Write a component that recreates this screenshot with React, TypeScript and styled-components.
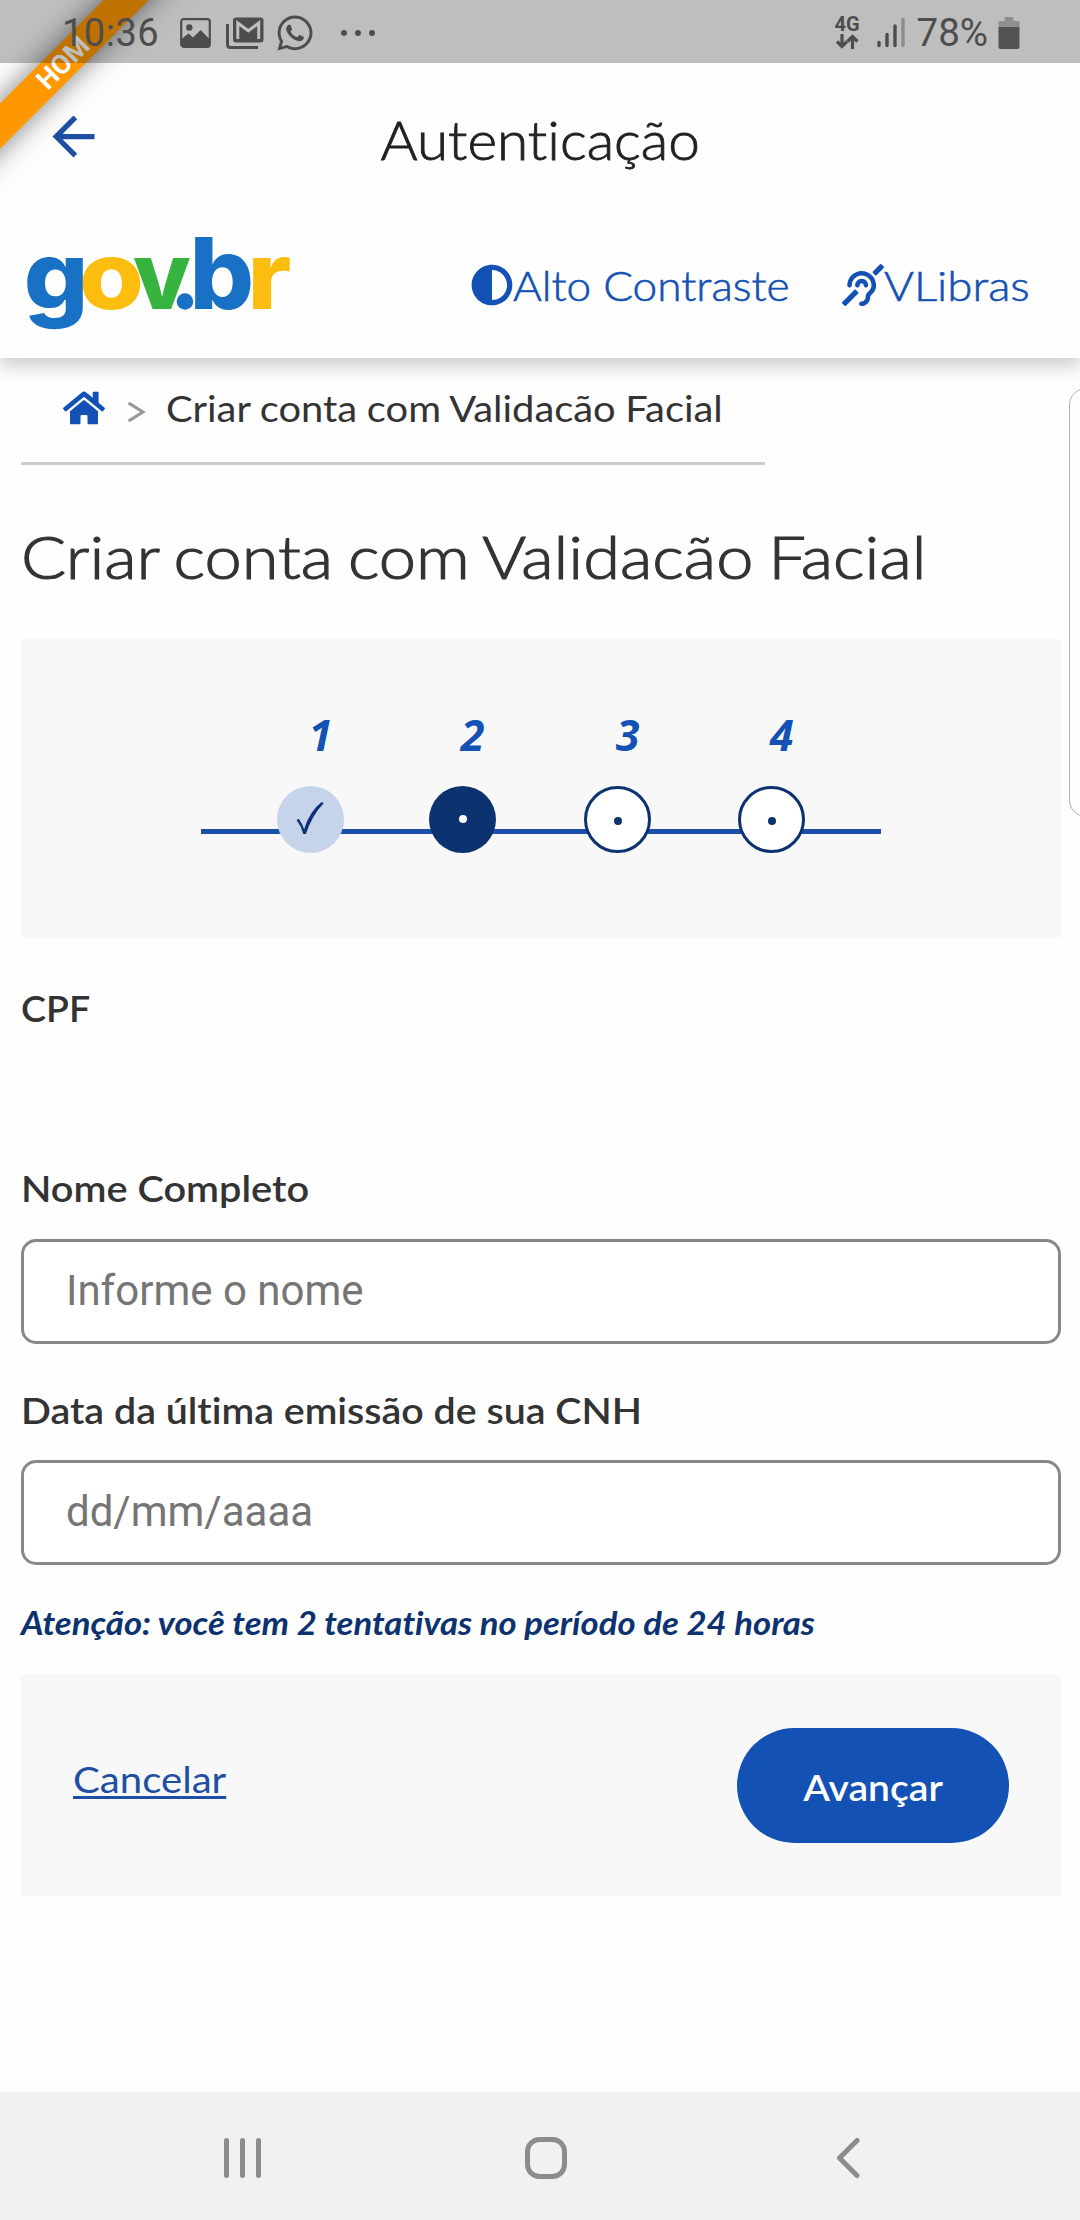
import React from "react";
import styled, { createGlobalStyle } from "styled-components";
import { FaAdjust, FaDeaf, FaHome, FaWhatsapp } from "react-icons/fa";
import { MdArrowBack } from "react-icons/md";

const blue = "#1351b4";
const navy = "#0c326f";
const ink = "#333333";
const statusInk = "#4d4d4d";

const GlobalStyle = createGlobalStyle`
  * { box-sizing: border-box; }
  body { margin: 0; background: #fefefe; }
`;

const Screen = styled.div`
  position: relative;
  width: 1080px;
  height: 2220px;
  display: flex;
  flex-direction: column;
  overflow: hidden;
  background: #fefefe;
  color: ${ink};
  font-family: Lato, "Open Sans", sans-serif;
  font-variant-ligatures: none;
`;

/* Widens the letterforms of a run of text, keeping its height. */
const Wide = styled.span<{ $x: number; $origin?: string }>`
  display: inline-block;
  white-space: nowrap;
  transform: scaleX(${(p) => p.$x});
  transform-origin: ${(p) => p.$origin ?? "left"} center;
`;

const Ribbon = styled.div`
  position: absolute;
  top: 47px;
  left: -87px;
  width: 300px;
  height: 31.5px;
  display: flex;
  align-items: center;
  justify-content: center;
  background: #ff9800;
  color: #fff;
  font: 700 27px/30px Roboto, sans-serif;
  transform: rotate(-45deg);
  box-shadow: 0 0 28px rgba(0, 0, 0, 0.5);
  z-index: 1;
`;

const StatusBar = styled.header`
  position: relative;
  z-index: 2;
  flex: none;
  height: 63px;
  padding: 2px 60px 0 62px;
  display: flex;
  justify-content: space-between;
  align-items: center;
  background: rgba(0, 0, 0, 0.25);
  color: ${statusInk};
`;

const StatusGroup = styled.div<{ $gap: number }>`
  display: flex;
  align-items: center;
  gap: ${(p) => p.$gap}px;
  svg { display: block; }
`;

const Clock = styled.span`
  width: 103px;
  font: 400 38px/44px Roboto, sans-serif;
  letter-spacing: 0.5px;
`;

const ChatIcon = styled(FaWhatsapp)`
  margin: 0 10px 0 -4px;
`;

const Battery = styled.span`
  margin-left: 2px;
  font: 400 38.500px/44px Roboto, sans-serif;
`;

const Network = styled.div`
  margin-right: 7px;
  display: flex;
  flex-direction: column;
  align-items: center;
  gap: 2px;
  font: 700 20px/16px Roboto, sans-serif;
`;

const TitleBar = styled.div`
  flex: none;
  height: 146px;
  padding: 0 42px;
  display: grid;
  grid-template-columns: 63px 1fr 63px;
  align-items: center;
`;

const BackButton = styled.button`
  border: 0;
  padding: 0;
  width: 63px;
  height: 63px;
  background: none;
  color: #1f4fa3;
  svg { display: block; }
`;

const Title = styled.h1`
  margin: 8px 0 0;
  text-align: center;
  font-size: 53px;
  line-height: 64px;
  font-weight: 300;
  color: #212121;
  -webkit-text-stroke: 0.8px #212121;
`;

const GovHeader = styled.div`
  flex: none;
  height: 149px;
  padding: 0 50px 0 20px;
  display: flex;
  justify-content: space-between;
  align-items: center;
  background: #fefefe;
  box-shadow: 0 9px 16px rgba(0, 0, 0, 0.19);
  clip-path: inset(0 0 -40px 0);
  svg { display: block; }
`;

const Links = styled.nav`
  display: flex;
  gap: 52px;
  padding-top: 4px;
`;

const HeaderLink = styled.a<{ $width: number }>`
  width: ${(p) => p.$width}px;
  display: flex;
  align-items: center;
  font-size: 41px;
  line-height: 48px;
  font-weight: 300;
  color: ${blue};
  -webkit-text-stroke: 0.6px ${blue};
  svg { flex: none; margin-top: -1px; }
`;

const Breadcrumb = styled.nav`
  flex: none;
  width: 744px;
  height: 107px;
  margin-left: 21px;
  padding: 0 0 4px 42px;
  display: flex;
  align-items: center;
  border-bottom: 3px solid #cccccc;
  font-size: 36px;
  line-height: 44px;
  word-spacing: -0.5px;
  svg { display: block; color: ${blue}; }
`;

const Separator = styled.svg`
  margin: 7px 20px 0 22px;
`;

const Content = styled.main`
  flex: 1;
  padding: 0 19px 0 21px;
  display: flex;
  flex-direction: column;
`;

const Heading = styled.h2`
  margin: 56px 0 46px;
  font-size: 59px;
  line-height: 72px;
  height: 72px;
  font-weight: 300;
  word-spacing: -3px;
  -webkit-text-stroke: 1.1px ${ink};
`;

const StepPanel = styled.section`
  flex: none;
  height: 299px;
  padding: 73px 180px 0;
  background: #f8f8f8;
`;

const Track = styled.ol`
  position: relative;
  margin: 0;
  padding: 0 0 0 76px;
  list-style: none;
  display: grid;
  grid-template-columns: 152px 155px 154px 67px;
  &::before {
    content: "";
    position: absolute;
    left: 0;
    right: 0;
    top: 117px;
    height: 5px;
    background: #1a50a8;
  }
`;

const Step = styled.li`
  position: relative;
  width: 67px;
  display: flex;
  flex-direction: column;
  align-items: center;
  gap: 29px;
`;

const StepNumber = styled.span`
  padding: 1px 0 0 20px;
  font: italic 700 43px/44px "Open Sans", "Noto Sans", sans-serif;
  color: ${blue};
`;

type StepState = "done" | "current" | "todo";

const StepCircle = styled.span<{ $state: StepState }>`
  width: 67px;
  height: 67px;
  border-radius: 50%;
  display: flex;
  align-items: center;
  justify-content: center;
  border: ${(p) => (p.$state === "todo" ? `3px solid ${navy}` : "0")};
  background: ${(p) => ({ done: "#c5d4eb", current: navy, todo: "#fff" })[p.$state]};
`;

const Dot = styled.i<{ $state: StepState }>`
  width: 8px;
  height: 8px;
  border-radius: 50%;
  margin-top: ${(p) => (p.$state === "todo" ? 3 : -1)}px;
  background: ${(p) => (p.$state === "todo" ? navy : "#fff")};
`;

const Label = styled.label<{ $top: number }>`
  margin-top: ${(p) => p.$top}px;
  height: 44px;
  font-size: 37px;
  line-height: 44px;
  font-weight: 600;
`;

const Field = styled.input<{ $top: number }>`
  flex: none;
  width: 100%;
  height: 105px;
  margin-top: ${(p) => p.$top}px;
  padding: 0 42px 2px;
  border: 3px solid #888888;
  border-radius: 15px;
  background: #fff;
  font: 400 42px/50px Roboto, sans-serif;
  &::placeholder { color: #757575; opacity: 1; }
`;

const Warning = styled.p`
  margin: 38px 0 32px;
  height: 40px;
  font-size: 32px;
  line-height: 40px;
  font-weight: 700;
  font-style: italic;
  color: ${navy};
`;

const Actions = styled.section`
  flex: none;
  height: 221px;
  padding: 0 52px;
  display: flex;
  align-items: center;
  justify-content: space-between;
  background: #f8f8f8;
`;

const Cancel = styled.a`
  margin-top: -14px;
  font-size: 37px;
  line-height: 44px;
  color: #1f4fa3;
  span {
    text-decoration: underline;
    text-decoration-thickness: 3px;
    text-underline-offset: 3px;
    text-decoration-skip-ink: none;
  }
`;

const Submit = styled.button`
  width: 272px;
  height: 115px;
  padding: 3px 0 0;
  border: 0;
  border-radius: 58px;
  background: ${blue};
  color: #fff;
  font: 600 37px/44px Lato, sans-serif;
`;

const EdgePanel = styled.aside`
  position: absolute;
  left: 1069px;
  top: 388px;
  width: 40px;
  height: 429px;
  border: 1.5px solid #b0b0b0;
  border-radius: 17px;
  background: #fefefe;
`;

const NavBar = styled.footer`
  flex: none;
  height: 128px;
  padding: 4px 213px 0 221px;
  display: flex;
  align-items: center;
  justify-content: space-between;
  background: #f1f1f1;
`;

const HomeKey = styled.svg`
  margin-right: 11px;
`;

const logoGlyphs = [
  { ch: "o", x: 79, sx: 1.115, sy: 1, fill: "#fdbd0e" },
  { ch: "g", x: 23.8, sx: 1.077, sy: 1, fill: "#1871c4" },
  { ch: "v", x: 133, sx: 1, sy: 1, fill: "#37b440" },
  { ch: "b", x: 189.6, sx: 1.077, sy: 1.05, fill: "#1871c4" },
  { ch: "r", x: 247.3, sx: 1.12, sy: 1, fill: "#fdbd0e" },
];

const LogoSvg = styled.svg`
  overflow: visible;
`;

const GovLogo = () => (
  <LogoSvg width="276" height="110" viewBox="20 228 276 110" role="img" aria-label="gov.br">
    {logoGlyphs.map((g) => (
      <text
        key={g.ch}
        transform={`translate(${g.x} 307.5) scale(${g.sx} ${g.sy})`}
        fontFamily="Inter, sans-serif"
        fontWeight="800"
        fontSize="94"
        fill={g.fill}
      >
        {g.ch}
      </text>
    ))}
    <circle cx="185" cy="300.5" r="8.3" fill="#1871c4" />
  </LogoSvg>
);

const PhotoIcon = () => (
  <svg width="31" height="30" viewBox="0 0 31 30">
    <rect x="1.200" y="1.200" width="28.600" height="27.600" rx="2.500" fill="none" stroke={statusInk} strokeWidth="2.200" />
    <circle cx="9.300" cy="9.500" r="3.200" fill={statusInk} />
    <path d="M2 20.500l6.500-5 4.500 4 7.500-7.500 9 9V28H2z" fill={statusInk} />
  </svg>
);

const MailStackIcon = () => (
  <svg width="38" height="32" viewBox="0 0 38 32">
    <path d="M1.500 7v20.500q0 3 3 3H32" fill="none" stroke={statusInk} strokeWidth="3" />
    <rect x="7" y="0.500" width="30.500" height="25" rx="3" fill={statusInk} />
    <path d="M11.800 22V6l10.500 7.800L32.700 6v16" fill="none" stroke="#bfbfbf" strokeWidth="3" />
  </svg>
);

const DotsIcon = () => (
  <svg width="36" height="8" viewBox="0 0 36 8">
    {[4, 18, 32].map((x) => (
      <circle key={x} cx={x} cy="4" r="3" fill={statusInk} />
    ))}
  </svg>
);

const DataArrowsIcon = () => (
  <svg width="24" height="15" viewBox="0 0 24 15" fill="none" stroke={statusInk} strokeWidth="3.200">
    <path d="M7 0v12M2 7.500l5 5 5-5M17.500 15V3M12.500 7.500l5-5 5 5" />
  </svg>
);

const SignalIcon = () => (
  <svg width="28" height="31" viewBox="0 0 28 31" strokeWidth="3.400" strokeLinecap="round" stroke={statusInk}>
    <path d="M2 28.500v-3M10 28.500v-11M18 28.500V9" />
    <path d="M26 28.500V2.500" stroke="#8c8c8c" />
  </svg>
);

const BatteryIcon = () => (
  <svg width="22" height="34" viewBox="0 0 22 34">
    <path d="M6.500 1h9v4H20q1.500 0 1.500 1.500V12H.5V6.500Q.5 5 2 5h4.500z" fill="#8f8f8f" />
    <path d="M.5 11h21v20q0 2-2 2h-17q-2 0-2-2z" fill="#525252" />
  </svg>
);

const CheckSvg = styled.svg`
  margin-top: -3px;
`;

const CheckIcon = () => (
  <CheckSvg width="31" height="35" viewBox="0 0 30 34">
    <path
      d="M1.500 18.500l2-1.300q3.700 4.800 5.300 10.300Q14 10 25.800 1l2 1.200Q16.500 14 10.500 32H8Q6 24.500 1.500 18.500z"
      fill={navy}
    />
  </CheckSvg>
);

const steps: { n: number; state: StepState }[] = [
  { n: 1, state: "done" },
  { n: 2, state: "current" },
  { n: 3, state: "todo" },
  { n: 4, state: "todo" },
];

export default function App() {
  return (
    <Screen>
      <GlobalStyle />
      <Ribbon>HOM</Ribbon>
      <StatusBar>
        <StatusGroup $gap={15}>
          <Clock>10:36</Clock>
          <PhotoIcon />
          <MailStackIcon />
          <ChatIcon size={40} />
          <DotsIcon />
        </StatusGroup>
        <StatusGroup $gap={10}>
          <Network>
            4G
            <DataArrowsIcon />
          </Network>
          <SignalIcon />
          <Battery>78%</Battery>
          <BatteryIcon />
        </StatusGroup>
      </StatusBar>
      <TitleBar>
        <BackButton aria-label="Voltar">
          <MdArrowBack size={63} />
        </BackButton>
        <Title>
          <Wide $x={1.07} $origin="center">Autenticação</Wide>
        </Title>
      </TitleBar>
      <GovHeader>
        <GovLogo />
        <Links>
          <HeaderLink $width={319}>
            <FaAdjust size={42} />
            <Wide $x={1.076}>Alto Contraste</Wide>
          </HeaderLink>
          <HeaderLink $width={188}>
            <FaDeaf size={42} />
            <Wide $x={1.115}>VLibras</Wide>
          </HeaderLink>
        </Links>
      </GovHeader>
      <Breadcrumb>
        <FaHome size={42} />
        <Separator width="19" height="22" viewBox="0 0 19 22">
          <path d="M1.500 2L16 11 1.500 20" fill="none" stroke="#999" strokeWidth="3.200" />
        </Separator>
        <Wide $x={1.108}>Criar conta com Validacão Facial</Wide>
      </Breadcrumb>
      <Content>
        <Heading>
          <Wide $x={1.132}>Criar conta com Validacão Facial</Wide>
        </Heading>
        <StepPanel>
          <Track>
            {steps.map(({ n, state }) => (
              <Step key={n}>
                <StepNumber>{n}</StepNumber>
                <StepCircle $state={state}>
                  {state === "done" ? <CheckIcon /> : <Dot $state={state} />}
                </StepCircle>
              </Step>
            ))}
          </Track>
        </StepPanel>
        <Label as="div" $top={48}>
          <Wide $x={1.015}>CPF</Wide>
        </Label>
        <Label htmlFor="nome" $top={136}>
          <Wide $x={1.073}>Nome Completo</Wide>
        </Label>
        <Field id="nome" $top={29} placeholder="Informe o nome" />
        <Label htmlFor="data" $top={44}>
          <Wide $x={1.064}>Data da última emissão de sua CNH</Wide>
        </Label>
        <Field id="data" $top={28} placeholder="dd/mm/aaaa" />
        <Warning>
          <Wide $x={1.084}>Atenção: você tem 2 tentativas no período de 24 horas</Wide>
        </Warning>
        <Actions>
          <Cancel>
            <Wide $x={1.085}>Cancelar</Wide>
          </Cancel>
          <Submit>
            <Wide $x={1.055} $origin="center">Avançar</Wide>
          </Submit>
        </Actions>
      </Content>
      <EdgePanel />
      <NavBar>
        <svg width="44" height="44" viewBox="0 0 44 44" stroke="#8c8c8c" strokeWidth="5" strokeLinecap="round">
          <path d="M5.500 4.500v35M21.500 4.500v35M37.500 4.500v35" />
        </svg>
        <HomeKey width="44" height="44" viewBox="0 0 44 44">
          <rect x="3.500" y="3.500" width="37" height="37" rx="12" fill="none" stroke="#8c8c8c" strokeWidth="5" />
        </HomeKey>
        <svg width="30" height="44" viewBox="0 0 30 44" fill="none" stroke="#8c8c8c" strokeWidth="5" strokeLinecap="round" strokeLinejoin="round">
          <path d="M20 4.500L2.500 22 20 39.500" />
        </svg>
      </NavBar>
    </Screen>
  );
}
